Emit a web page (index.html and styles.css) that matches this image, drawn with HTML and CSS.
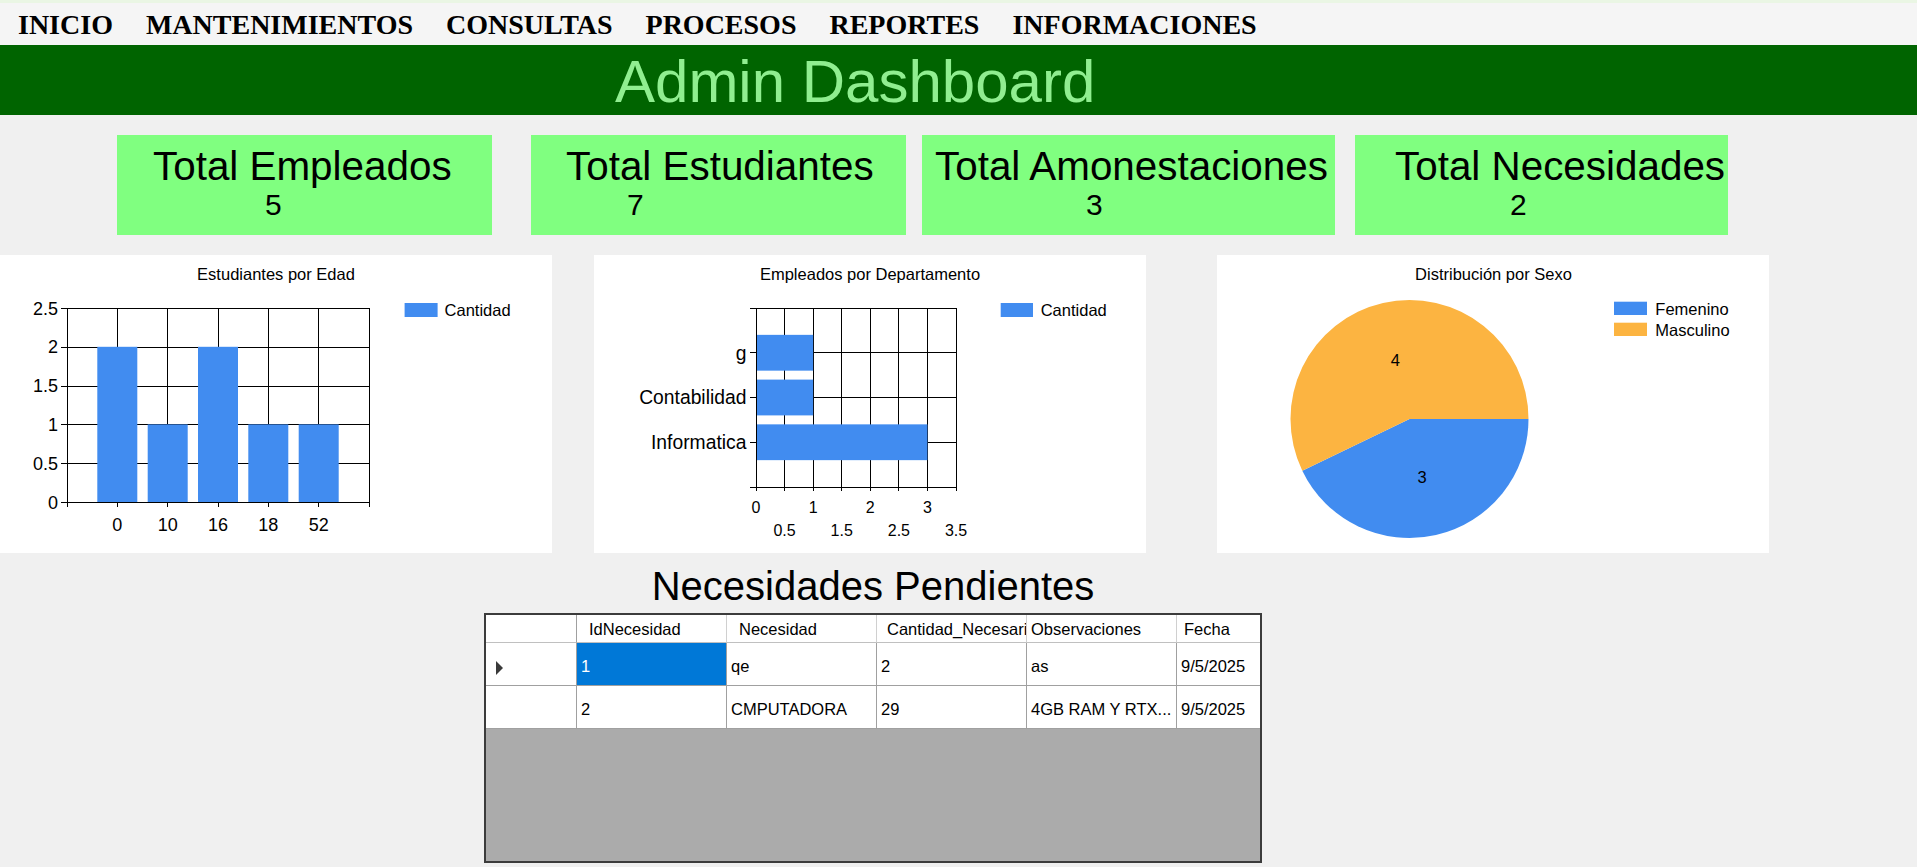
FILE: index.html
```html
<!DOCTYPE html>
<html lang="es">
<head>
<meta charset="utf-8">
<title>Admin Dashboard</title>
<link rel="stylesheet" href="styles.css">
</head>
<body>
<div class="app">
  <div class="topstrip"></div>
  <nav class="menubar">
    <span class="menu-item">INICIO</span>
    <span class="menu-item">MANTENIMIENTOS</span>
    <span class="menu-item">CONSULTAS</span>
    <span class="menu-item">PROCESOS</span>
    <span class="menu-item">REPORTES</span>
    <span class="menu-item">INFORMACIONES</span>
  </nav>
  <header class="banner">
    <h1 class="banner-title">Admin Dashboard</h1>
  </header>

  <section class="cards">
    <div class="card card--emp">
      <div class="card-title">Total Empleados</div>
      <div class="card-value">5</div>
    </div>
    <div class="card card--est">
      <div class="card-title">Total Estudiantes</div>
      <div class="card-value">7</div>
    </div>
    <div class="card card--amo">
      <div class="card-title">Total Amonestaciones</div>
      <div class="card-value">3</div>
    </div>
    <div class="card card--nec">
      <div class="card-title">Total Necesidades</div>
      <div class="card-value">2</div>
    </div>
  </section>

  <section class="charts">
    <div class="chart chart--age">
      <svg class="chart-svg" width="552" height="298" viewBox="0 0 552 298">
        <text class="c-title" x="276" y="25" text-anchor="middle">Estudiantes por Edad</text>
        <path class="c-grid" shape-rendering="crispEdges" d="M61 53.5H369 M61 92.3H369 M61 131.1H369 M61 169.9H369 M61 208.7H369 M117.3 53V252 M167.7 53V252 M218 53V252 M268.3 53V252 M318.7 53V252 M369 53V252"/>
        <rect class="c-blue" x="97.3" y="91.8" width="40" height="155.2"/>
        <rect class="c-blue" x="147.7" y="169.4" width="40" height="77.6"/>
        <rect class="c-blue" x="198" y="91.8" width="40" height="155.2"/>
        <rect class="c-blue" x="248.3" y="169.4" width="40" height="77.6"/>
        <rect class="c-blue" x="298.7" y="169.4" width="40" height="77.6"/>
        <path class="c-grid" shape-rendering="crispEdges" d="M67.5 53V252 M61 247.5H369"/>
        <g class="c-axis" text-anchor="end">
          <text x="58" y="59.5">2.5</text>
          <text x="58" y="98.3">2</text>
          <text x="58" y="137.1">1.5</text>
          <text x="58" y="175.9">1</text>
          <text x="58" y="214.7">0.5</text>
          <text x="58" y="253.5">0</text>
        </g>
        <g class="c-axis" text-anchor="middle">
          <text x="117.3" y="276">0</text>
          <text x="167.7" y="276">10</text>
          <text x="218" y="276">16</text>
          <text x="268.3" y="276">18</text>
          <text x="318.7" y="276">52</text>
        </g>
        <rect class="c-blue" x="404.6" y="48" width="33" height="14"/>
        <text class="c-legend" x="444.6" y="61">Cantidad</text>
      </svg>
    </div>

    <div class="chart chart--dept">
      <svg class="chart-svg" width="552" height="298" viewBox="0 0 552 298">
        <text class="c-title" x="276" y="25" text-anchor="middle">Empleados por Departamento</text>
        <path class="c-grid" shape-rendering="crispEdges" d="M156 53.5H362 M156 97.75H362 M156 142.5H362 M156 187.25H362 M190.57 53V236 M219.14 53V236 M247.71 53V236 M276.29 53V236 M304.86 53V236 M333.43 53V236 M362 53V236"/>
        <rect class="c-blue" x="162" y="79.85" width="57.14" height="35.8"/>
        <rect class="c-blue" x="162" y="124.6" width="57.14" height="35.8"/>
        <rect class="c-blue" x="162" y="169.35" width="171.43" height="35.8"/>
        <path class="c-grid" shape-rendering="crispEdges" d="M162 53V236 M156 232H362"/>
        <g class="c-axis c-axis--cat" text-anchor="end">
          <text x="152.4" y="104.5">g</text>
          <text x="152.4" y="149.3">Contabilidad</text>
          <text x="152.4" y="194">Informatica</text>
        </g>
        <g class="c-axis c-axis--small" text-anchor="middle">
          <text x="162" y="258.3">0</text>
          <text x="219.14" y="258.3">1</text>
          <text x="276.29" y="258.3">2</text>
          <text x="333.43" y="258.3">3</text>
          <text x="190.57" y="281">0.5</text>
          <text x="247.71" y="281">1.5</text>
          <text x="304.86" y="281">2.5</text>
          <text x="362" y="281">3.5</text>
        </g>
        <rect class="c-blue" x="406.7" y="48" width="32.3" height="14"/>
        <text class="c-legend" x="446.7" y="61">Cantidad</text>
      </svg>
    </div>

    <div class="chart chart--sex">
      <svg class="chart-svg" width="552" height="298" viewBox="0 0 552 298">
        <text class="c-title" x="276.5" y="25" text-anchor="middle">Distribución por Sexo</text>
        <path class="c-blue" d="M192.5 164 L311.5 164 A119 119 0 0 1 85.285 215.632 Z"/>
        <path class="c-orange" d="M192.5 164 L85.285 215.632 A119 119 0 1 1 311.5 164 Z"/>
        <text class="c-legend" x="178.4" y="111" text-anchor="middle">4</text>
        <text class="c-legend" x="205" y="227.7" text-anchor="middle">3</text>
        <rect class="c-blue" x="397" y="46.7" width="33" height="13.3"/>
        <rect class="c-orange" x="397" y="67.7" width="33" height="13.3"/>
        <text class="c-legend" x="438.3" y="59.5">Femenino</text>
        <text class="c-legend" x="438.3" y="80.5">Masculino</text>
      </svg>
    </div>
  </section>

  <section class="needs">
    <h2 class="needs-title">Necesidades Pendientes</h2>
    <div class="grid">
      <table class="grid-table">
        <colgroup>
          <col class="col-rowhead">
          <col class="col-data">
          <col class="col-data">
          <col class="col-data">
          <col class="col-data">
          <col class="col-data">
        </colgroup>
        <thead>
          <tr>
            <th class="rowhead"></th>
            <th>IdNecesidad</th>
            <th>Necesidad</th>
            <th class="th--cant">Cantidad_Necesaria</th>
            <th class="th--obs">Observaciones</th>
            <th class="th--fecha">Fecha</th>
          </tr>
        </thead>
        <tbody>
          <tr>
            <td class="rowhead"><span class="row-indicator"></span></td>
            <td class="cell--selected">1</td>
            <td>qe</td>
            <td>2</td>
            <td>as</td>
            <td>9/5/2025</td>
          </tr>
          <tr>
            <td class="rowhead"></td>
            <td>2</td>
            <td>CMPUTADORA</td>
            <td>29</td>
            <td>4GB RAM Y RTX...</td>
            <td>9/5/2025</td>
          </tr>
        </tbody>
      </table>
    </div>
  </section>
</div>
</body>
</html>
```

FILE: styles.css
```css
html, body {
  margin: 0;
  padding: 0;
}

body {
  width: 1917px;
  height: 867px;
  overflow: hidden;
  background: #f0f0f0;
  font-family: "Liberation Sans", Arial, sans-serif;
  color: #000;
}

.topstrip {
  height: 3px;
  background: #eaf6e4;
}

.menubar {
  height: 42px;
  box-sizing: border-box;
  padding: 6px 0 0 18px;
  background: #f5f5f5;
  display: flex;
  gap: 33px;
  font-family: "Liberation Serif", "Times New Roman", serif;
  font-weight: bold;
  font-size: 28px;
}

.menu-item {
  line-height: 32px;
  white-space: nowrap;
}

.banner {
  height: 70px;
  background: #006400;
}

.banner-title {
  margin: 0;
  padding: 3px 0 0 615px;
  font-size: 60px;
  line-height: 67px;
  font-weight: normal;
  color: #90ee90;
  white-space: nowrap;
}

/* Summary cards */
.cards {
  display: flex;
  margin-top: 20px;
  padding-left: 117px;
}

.card {
  height: 100px;
  box-sizing: border-box;
  padding-top: 9px;
  background: #80ff80;
}

.card-title {
  font-size: 40.4px;
  line-height: 44px;
  white-space: nowrap;
}

.card-value {
  font-size: 30px;
  line-height: 34px;
}

.card--emp { width: 375px; }
.card--emp .card-title { padding-left: 36px; }
.card--emp .card-value { padding-left: 148px; }

.card--est { width: 375px; margin-left: 39px; }
.card--est .card-title { padding-left: 35px; }
.card--est .card-value { padding-left: 96px; }

.card--amo { width: 413px; margin-left: 16px; }
.card--amo .card-title { padding-left: 13px; }
.card--amo .card-value { padding-left: 164px; }

.card--nec { width: 373px; margin-left: 20px; }
.card--nec .card-title { padding-left: 40px; }
.card--nec .card-value { padding-left: 155px; }

/* Charts */
.charts {
  display: flex;
  margin-top: 20px;
}

.chart {
  width: 552px;
  height: 298px;
  background: #fff;
  flex: none;
}

.chart--dept { margin-left: 42px; }
.chart--sex { margin-left: 71px; }

.chart-svg {
  display: block;
  font-family: "Liberation Sans", Arial, sans-serif;
}

.c-title {
  font-size: 16.5px;
  fill: #000;
}

.c-legend {
  font-size: 16.5px;
  fill: #000;
}

.c-axis {
  font-size: 18px;
  fill: #000;
}

.c-axis--cat {
  font-size: 19.3px;
}

.c-axis--small {
  font-size: 16px;
}

.c-grid {
  fill: none;
  stroke: #000;
  stroke-width: 1;
}

.c-blue { fill: #418cf0; }
.c-orange { fill: #fcb441; }

/* Needs table */
.needs {
  margin-left: 484px;
  width: 778px;
}

.needs-title {
  margin: 10px 0 0;
  font-size: 40px;
  line-height: 46px;
  font-weight: normal;
  text-align: center;
  white-space: nowrap;
}

.grid {
  margin-top: 4px;
  height: 250px;
  box-sizing: border-box;
  border: 2px solid #3c3c3c;
  background: #ababab;
  overflow: hidden;
}

.grid-table {
  table-layout: fixed;
  width: 841px;
  border-collapse: separate;
  border-spacing: 0;
  font-size: 16.5px;
}

.col-rowhead { width: 91px; }
.col-data { width: 150px; }

.grid-table th,
.grid-table td {
  box-sizing: border-box;
  background: #fff;
  border-right: 1px solid #a0a0a0;
  border-bottom: 1px solid #a0a0a0;
  white-space: nowrap;
  overflow: hidden;
  text-overflow: clip;
  text-align: left;
  font-weight: normal;
}

.grid-table th {
  height: 28px;
  padding: 2px 4px 0 12px;
  border-right-color: #d0d0d0;
  border-bottom-color: #c0c0c0;
}

.grid-table th.th--cant { padding-left: 10px; }
.grid-table th.th--obs { padding-left: 4px; }
.grid-table th.th--fecha { padding-left: 7px; }

.grid-table td {
  height: 43px;
  padding: 5px 2px 0 4px;
}

.grid-table .rowhead {
  padding: 5px 0 0 10px;
  border-right-color: #a0a0a0;
}

.grid-table .cell--selected {
  background: #0078d7;
  color: #fff;
}

.row-indicator {
  display: inline-block;
  width: 0;
  height: 0;
  border-top: 7px solid transparent;
  border-bottom: 7px solid transparent;
  border-left: 7px solid #3a3a3a;
  vertical-align: middle;
}
```
